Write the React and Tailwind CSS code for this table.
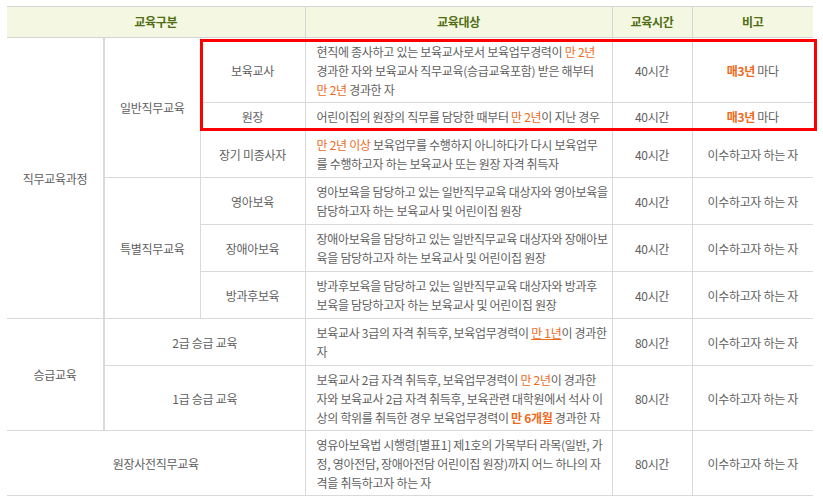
import React from "react";

const O = ({ children, b, u }) => (
  <span className={`text-[#ee6a1c] ${b ? "font-bold" : ""} ${u ? "underline" : ""}`}>{children}</span>
);

const td = "border-b border-r border-[#d9d9d9] text-center align-middle leading-[19px] whitespace-nowrap";
const tdL = "border-b border-r border-[#d9d9d9] text-left align-middle leading-[19px] pl-[11px] whitespace-nowrap";
const tdLast = "border-b border-[#d9d9d9] text-center align-middle leading-[19px] whitespace-nowrap";

export default function App() {
  return (
    <div
      className="w-[823px] h-[503px] bg-white relative text-[12px] text-[#5f5f5f]"
      style={{ fontFamily: '"Noto Sans CJK KR", "Noto Sans", sans-serif' }}
    >
      <div className="pt-[6px] pl-[7px]">
        <table className="table-fixed border-collapse w-[806px] tracking-[-0.3px]">
          <colgroup>
            <col className="w-[97px]" />
            <col className="w-[96px]" />
            <col className="w-[105px]" />
            <col className="w-[307px]" />
            <col className="w-[80px]" />
            <col className="w-[121px]" />
          </colgroup>
          <thead>
            <tr className="h-[31px] bg-[#f4f7e1] border-t border-[#d5d5d5] text-[#4f6e14] font-bold">
              <th colSpan={3} className="border-b border-r border-[#d5d5d5] font-bold">교육구분</th>
              <th className="border-b border-r border-[#d5d5d5] font-bold">교육대상</th>
              <th className="border-b border-r border-[#d5d5d5] font-bold">교육시간</th>
              <th className="border-b border-[#d5d5d5] font-bold">비고</th>
            </tr>
          </thead>
          <tbody>
            <tr className="h-[65px]">
              <td rowSpan={6} className={`${td} border-r-2`}>직무교육과정</td>
              <td rowSpan={3} className={td}>일반직무교육</td>
              <td className={td}>보육교사</td>
              <td className={tdL}>
                현직에 종사하고 있는 보육교사로서 보육업무경력이 <O>만 2년</O>
                <br />경과한 자와 보육교사 직무교육(승급교육포함) 받은 해부터
                <br /><O>만 2년</O> 경과한 자
              </td>
              <td className={td}>40시간</td>
              <td className={tdLast}><O b>매3년</O> 마다</td>
            </tr>
            <tr className="h-[28px]">
              <td className={td}>원장</td>
              <td className={tdL}>
                어린이집의 원장의 직무를 담당한 때부터 <O>만 2년</O>이 지난 경우
              </td>
              <td className={td}>40시간</td>
              <td className={tdLast}><O b>매3년</O> 마다</td>
            </tr>
            <tr className="h-[47px]">
              <td className={td}>장기 미종사자</td>
              <td className={tdL}>
                <O>만 2년 이상</O> 보육업무를 수행하지 아니하다가 다시 보육업무
                <br />를 수행하고자 하는 보육교사 또는 원장 자격 취득자
              </td>
              <td className={td}>40시간</td>
              <td className={tdLast}>이수하고자 하는 자</td>
            </tr>
            <tr className="h-[47px]">
              <td rowSpan={3} className={td}>특별직무교육</td>
              <td className={td}>영아보육</td>
              <td className={tdL}>
                영아보육을 담당하고 있는 일반직무교육 대상자와 영아보육을
                <br />담당하고자 하는 보육교사 및 어린이집 원장
              </td>
              <td className={td}>40시간</td>
              <td className={tdLast}>이수하고자 하는 자</td>
            </tr>
            <tr className="h-[47px]">
              <td className={td}>장애아보육</td>
              <td className={tdL}>
                장애아보육을 담당하고 있는 일반직무교육 대상자와 장애아보
                <br />육을 담당하고자 하는 보육교사 및 어린이집 원장
              </td>
              <td className={td}>40시간</td>
              <td className={tdLast}>이수하고자 하는 자</td>
            </tr>
            <tr className="h-[47px]">
              <td className={td}>방과후보육</td>
              <td className={tdL}>
                방과후보육을 담당하고 있는 일반직무교육 대상자와 방과후
                <br />보육을 담당하고자 하는 보육교사 및 어린이집 원장
              </td>
              <td className={td}>40시간</td>
              <td className={tdLast}>이수하고자 하는 자</td>
            </tr>
            <tr className="h-[47px]">
              <td rowSpan={2} className={`${td} border-r-2`}>승급교육</td>
              <td colSpan={2} className={td}>2급 승급 교육</td>
              <td className={tdL}>
                보육교사 3급의 자격 취득후, 보육업무경력이 <O u>만 1년</O>이 경과한
                <br />자
              </td>
              <td className={td}>80시간</td>
              <td className={tdLast}>이수하고자 하는 자</td>
            </tr>
            <tr className="h-[65px]">
              <td colSpan={2} className={td}>1급 승급 교육</td>
              <td className={tdL}>
                보육교사 2급 자격 취득후, 보육업무경력이 <O>만 2년</O>이 경과한
                <br />자와 보육교사 2급 자격 취득후, 보육관련 대학원에서 석사 이
                <br />상의 학위를 취득한 경우 보육업무경력이 <O b>만 6개월</O> 경과한 자
              </td>
              <td className={td}>80시간</td>
              <td className={tdLast}>이수하고자 하는 자</td>
            </tr>
            <tr className="h-[65px]">
              <td colSpan={3} className={td}>원장사전직무교육</td>
              <td className={tdL}>
                영유아보육법 시행령[별표1] 제1호의 가목부터 라목(일반, 가
                <br />정, 영아전담, 장애아전담 어린이집 원장)까지 어느 하나의 자
                <br />격을 취득하고자 하는 자
              </td>
              <td className={td}>80시간</td>
              <td className={tdLast}>이수하고자 하는 자</td>
            </tr>
          </tbody>
        </table>
      </div>
      <div className="absolute left-[200px] top-[39px] w-[617px] h-[92px] border-[3px] border-[#ff0000] pointer-events-none" />
    </div>
  );
}
